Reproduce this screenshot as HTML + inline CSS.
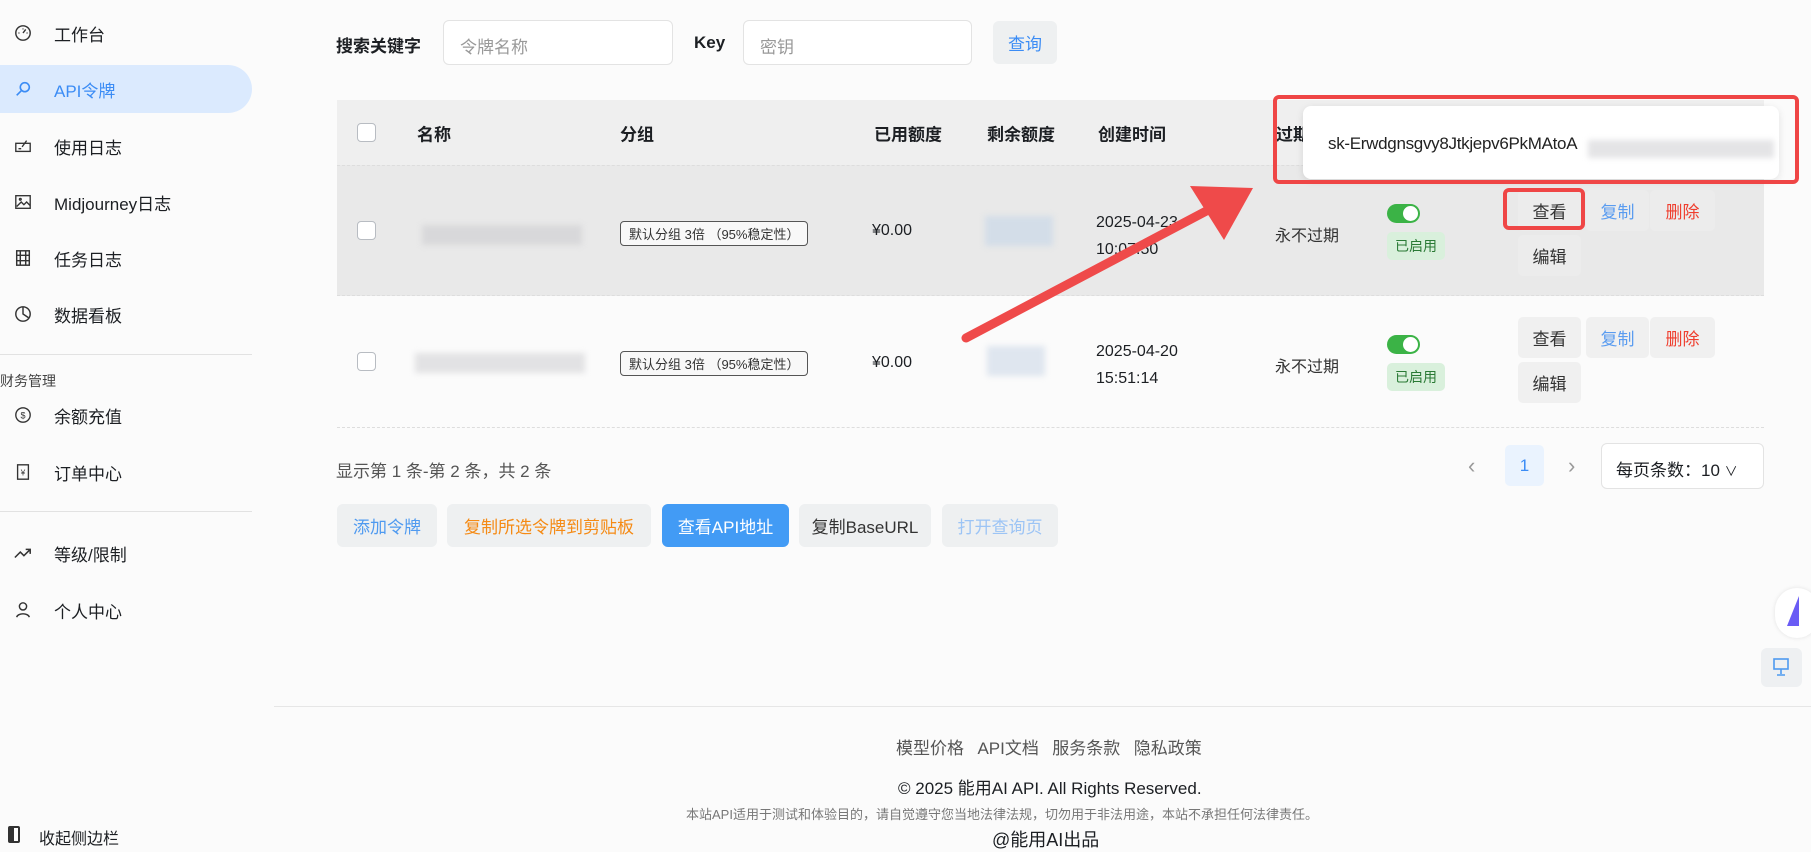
<!DOCTYPE html>
<html><head><meta charset="utf-8">
<style>
*{box-sizing:border-box;margin:0;padding:0}
body{width:1811px;height:852px;overflow:hidden;background:#fbfbfb;font-family:"Liberation Sans","Noto Sans CJK SC",sans-serif;color:#1c1f23;position:relative;font-size:16px}
.a{position:absolute;white-space:nowrap}
.nav{position:absolute;left:0;width:252px;height:48px;display:flex;align-items:center;font-size:17px;color:#1c1f23}
.nav .ic{position:absolute;left:14px;width:18px;height:18px}
.nav span{position:absolute;left:54px}
.act{background:#dbeafe;border-radius:0 24px 24px 0;color:#3b8cf5}
.btn{position:absolute;height:43px;border-radius:6px;background:#eef0f1;display:flex;align-items:center;justify-content:center;font-size:17px}
.th{position:absolute;top:133px;font-weight:bold;font-size:17px;transform:translateY(-50%)}
.cb{position:absolute;width:19px;height:19px;border:1.5px solid #b8bcc2;border-radius:4px;background:#fff}
.tag{position:absolute;border:1px solid #555;border-radius:4px;font-size:13px;padding:2px 8px;color:#333;background:#f8f8f8}
.tog{position:absolute;width:33px;height:19px;border-radius:10px;background:#3bb346}
.tog:after{content:"";position:absolute;right:2px;top:2px;width:15px;height:15px;border-radius:50%;background:#fff}
.en{position:absolute;background:#d9f0dc;color:#2a7a35;font-size:14px;padding:4px 8px;border-radius:5px}
.blur{position:absolute;background:#d8d8da;filter:blur(3px)}
.sb{position:absolute;border-radius:5px;background:#ececec;display:flex;align-items:center;justify-content:center;font-size:17px;height:41px}
</style></head><body>
<div class="nav" style="top:9px"><svg class="ic" viewBox="0 0 20 20" fill="none" stroke="#333" stroke-width="1.6"><circle cx="10" cy="10" r="8"/><path d="M10 10l3-4M5 10h1M14 10h1M10 5v1"/></svg><span>工作台</span></div>
<div class="nav act" style="top:65px"><svg class="ic" viewBox="0 0 20 20" fill="none" stroke="#3b8cf5" stroke-width="1.8"><circle cx="12" cy="8" r="5"/><path d="M8 12l-5 5"/></svg><span>API令牌</span></div>
<div class="nav" style="top:122px"><svg class="ic" viewBox="0 0 20 20" fill="none" stroke="#333" stroke-width="1.5"><rect x="2" y="7" width="16" height="9"/><path d="M14 4l-5 7M5 13h3"/></svg><span>使用日志</span></div>
<div class="nav" style="top:178px"><svg class="ic" viewBox="0 0 20 20" fill="none" stroke="#333" stroke-width="1.5"><rect x="2" y="3" width="16" height="14"/><path d="M3 15l5-5 3 3 3-3 4 4"/><circle cx="7" cy="7" r="1"/></svg><span>Midjourney日志</span></div>
<div class="nav" style="top:234px"><svg class="ic" viewBox="0 0 20 20" fill="none" stroke="#333" stroke-width="1.6"><rect x="3" y="2" width="14" height="16"/><path d="M7 2v16M13 2v16M3 7h14M3 13h14"/></svg><span>任务日志</span></div>
<div class="nav" style="top:290px"><svg class="ic" viewBox="0 0 20 20" fill="none" stroke="#333" stroke-width="1.6"><circle cx="10" cy="10" r="8"/><path d="M10 2v8l6 4"/></svg><span>数据看板</span></div>
<div class="a" style="left:0;top:354px;width:252px;border-top:1px solid #e2e2e2"></div>
<div class="a" style="left:0;top:371px;font-size:14px;color:#444">财务管理</div>
<div class="nav" style="top:391px"><svg class="ic" viewBox="0 0 20 20" fill="none" stroke="#333" stroke-width="1.5"><circle cx="10" cy="10" r="8"/><text x="10" y="14" font-size="10" text-anchor="middle" fill="#333" stroke="none">$</text></svg><span>余额充值</span></div>
<div class="nav" style="top:448px"><svg class="ic" viewBox="0 0 20 20" fill="none" stroke="#333" stroke-width="1.5"><path d="M4 2h12v16H4z"/><text x="10" y="14" font-size="9" text-anchor="middle" fill="#333" stroke="none">¥</text></svg><span>订单中心</span></div>
<div class="a" style="left:0;top:511px;width:252px;border-top:1px solid #e2e2e2"></div>
<div class="nav" style="top:529px"><svg class="ic" viewBox="0 0 20 20" fill="none" stroke="#333" stroke-width="1.7"><path d="M1 15l6-6 4 4 7-7M13 6h5v5"/></svg><span>等级/限制</span></div>
<div class="nav" style="top:586px"><svg class="ic" viewBox="0 0 20 20" fill="none" stroke="#333" stroke-width="1.6"><circle cx="10" cy="6" r="4"/><path d="M3 18c1-5 13-5 14 0"/></svg><span>个人中心</span></div>
<div class="a" style="left:8px;top:826px;width:12px;height:17px;border:2px solid #333;border-radius:2px;background:linear-gradient(90deg,#333 50%,#fff 50%)"></div>
<div class="a" style="left:39px;top:825px;font-size:16px">收起侧边栏</div>

<div class="a" style="left:336px;top:32px;font-size:17px;font-weight:bold">搜索关键字</div>
<div class="a" style="left:443px;top:20px;width:230px;height:45px;border:1px solid #e3e3e3;border-radius:6px;background:#fff;padding:12px 16px;color:#999;font-size:17px">令牌名称</div>
<div class="a" style="left:694px;top:33px;font-size:17px;font-weight:bold">Key</div>
<div class="a" style="left:743px;top:20px;width:229px;height:45px;border:1px solid #e3e3e3;border-radius:6px;background:#fff;padding:12px 16px;color:#999;font-size:17px">密钥</div>
<div class="btn" style="left:993px;top:21px;width:64px;color:#3b8cf5">查询</div>

<div class="a" style="left:337px;top:100px;width:1427px;height:65px;background:#efefef"></div>
<div class="a" style="left:337px;top:165px;width:1427px;height:131px;background:#e9e9e9;border-top:1px dashed #ddd;border-bottom:1px dashed #ddd"></div>
<div class="a" style="left:337px;top:427px;width:1427px;border-top:1px dashed #ddd"></div>
<div class="cb" style="left:357px;top:123px"></div>
<div class="th" style="left:417px">名称</div>
<div class="th" style="left:620px">分组</div>
<div class="th" style="left:874px">已用额度</div>
<div class="th" style="left:987px">剩余额度</div>
<div class="th" style="left:1098px">创建时间</div>
<div class="th" style="left:1276px">过期</div>

<div class="cb" style="left:357px;top:221px"></div>
<div class="blur" style="left:422px;top:225px;width:160px;height:20px"></div>
<div class="tag" style="left:620px;top:221px">默认分组 3倍 （95%稳定性）</div>
<div class="a" style="left:872px;top:222px;font-size:16px">¥0.00</div>
<div class="blur" style="left:985px;top:216px;width:68px;height:30px;background:#d3dde8"></div>
<div class="a" style="left:1096px;top:209px;font-size:16px;line-height:27px">2025-04-23<br>10:07:50</div>
<div class="a" style="left:1275px;top:222px;font-size:16px;color:#333">永不过期</div>
<div class="tog" style="left:1387px;top:204px"></div>
<div class="en" style="left:1387px;top:232px">已启用</div>
<div class="sb" style="left:1518px;top:190px;width:63px;color:#333">查看</div>
<div class="sb" style="left:1586px;top:190px;width:63px;color:#5a9cf0">复制</div>
<div class="sb" style="left:1650px;top:190px;width:65px;color:#ef3e2e">删除</div>
<div class="sb" style="left:1518px;top:235px;width:63px;color:#333">编辑</div>

<div class="cb" style="left:357px;top:352px"></div>
<div class="blur" style="left:415px;top:353px;width:170px;height:20px;background:#e2e2e4"></div>
<div class="tag" style="left:620px;top:351px">默认分组 3倍 （95%稳定性）</div>
<div class="a" style="left:872px;top:354px;font-size:16px">¥0.00</div>
<div class="blur" style="left:987px;top:346px;width:58px;height:30px;background:#dfe6ef"></div>
<div class="a" style="left:1096px;top:338px;font-size:16px;line-height:27px">2025-04-20<br>15:51:14</div>
<div class="a" style="left:1275px;top:353px;font-size:16px;color:#333">永不过期</div>
<div class="tog" style="left:1387px;top:335px"></div>
<div class="en" style="left:1387px;top:363px">已启用</div>
<div class="sb" style="left:1518px;top:317px;width:63px;color:#333;background:#f0f0f0">查看</div>
<div class="sb" style="left:1586px;top:317px;width:63px;color:#5a9cf0;background:#f0f0f0">复制</div>
<div class="sb" style="left:1650px;top:317px;width:65px;color:#ef3e2e;background:#f0f0f0">删除</div>
<div class="sb" style="left:1518px;top:362px;width:63px;color:#333;background:#f0f0f0">编辑</div>

<div class="a" style="left:1303px;top:106px;width:476px;height:73px;background:#fff;border-radius:8px;box-shadow:0 2px 8px rgba(0,0,0,.1)"></div>
<div class="a" style="left:1328px;top:134px;font-size:17px;color:#222;letter-spacing:-0.3px">sk-Erwdgnsgvy8Jtkjepv6PkMAtoA</div>
<div class="blur" style="left:1588px;top:140px;width:186px;height:18px;background:#e4e4e6"></div>
<div class="a" style="left:1273px;top:95px;width:526px;height:89px;border:4px solid #ef4646;border-radius:6px"></div>
<div class="a" style="left:1503px;top:188px;width:82px;height:42px;border:4px solid #ef4646;border-radius:6px"></div>
<svg class="a" style="left:0;top:0" width="1811" height="852"><path d="M966 338L1212 208" stroke="#ef4a4a" stroke-width="9" stroke-linecap="round"/><path d="M1253 188L1190 186L1224 240Z" fill="#ef4a4a"/></svg>

<div class="a" style="left:336px;top:457px;font-size:17px;color:#555">显示第 1 条-第 2 条，共 2 条</div>
<div class="a" style="left:1468px;top:453px;font-size:22px;color:#999">‹</div>
<div class="a" style="left:1505px;top:445px;width:39px;height:41px;background:#eaf3fe;border-radius:5px;color:#3b8cf5;text-align:center;line-height:41px;font-size:17px">1</div>
<div class="a" style="left:1568px;top:453px;font-size:22px;color:#999">›</div>
<div class="a" style="left:1601px;top:443px;width:163px;height:46px;border:1px solid #e3e3e3;border-radius:6px;background:#fff;padding:12px 14px;font-size:17px">每页条数：10 <span style="font-size:13px">∨</span></div>

<div class="btn" style="left:337px;top:504px;width:100px;color:#4f9af0">添加令牌</div>
<div class="btn" style="left:447px;top:504px;width:204px;color:#f58a14">复制所选令牌到剪贴板</div>
<div class="btn" style="left:662px;top:504px;width:127px;background:#429bf5;color:#fff">查看API地址</div>
<div class="btn" style="left:799px;top:504px;width:132px;color:#333">复制BaseURL</div>
<div class="btn" style="left:942px;top:504px;width:116px;color:#9cc4f5">打开查询页</div>

<div class="a" style="left:1775px;top:588px;width:44px;height:50px;border-radius:22px;background:#fff;box-shadow:0 0 4px rgba(0,0,0,.1)"></div>
<div class="a" style="left:1787px;top:596px;width:0;height:0;border-left:12px solid transparent;border-bottom:30px solid #6a5cf5"></div>
<div class="a" style="left:1761px;top:648px;width:41px;height:39px;background:#eef0f2;border-radius:6px"></div>
<svg class="a" style="left:1772px;top:657px" width="18" height="20" viewBox="0 0 18 20" fill="none" stroke="#4f9af0" stroke-width="1.6"><rect x="2" y="2" width="14" height="10"/><path d="M9 12v5M5 18h8"/></svg>

<div class="a" style="left:274px;top:706px;width:1537px;border-top:1px solid #e6e6e6"></div>
<div class="a" style="left:896px;top:734px;font-size:17px;color:#555;word-spacing:2px">模型价格&nbsp; API文档&nbsp; 服务条款&nbsp; 隐私政策</div>
<div class="a" style="left:898px;top:774px;font-size:17px;color:#1c1f23">© 2025 能用AI API. All Rights Reserved.</div>
<div class="a" style="left:686px;top:804px;font-size:13px;color:#777">本站API适用于测试和体验目的，请自觉遵守您当地法律法规，切勿用于非法用途，本站不承担任何法律责任。</div>
<div class="a" style="left:992px;top:826px;font-size:18px;color:#1c1f23">@能用AI出品</div>
</body></html>
